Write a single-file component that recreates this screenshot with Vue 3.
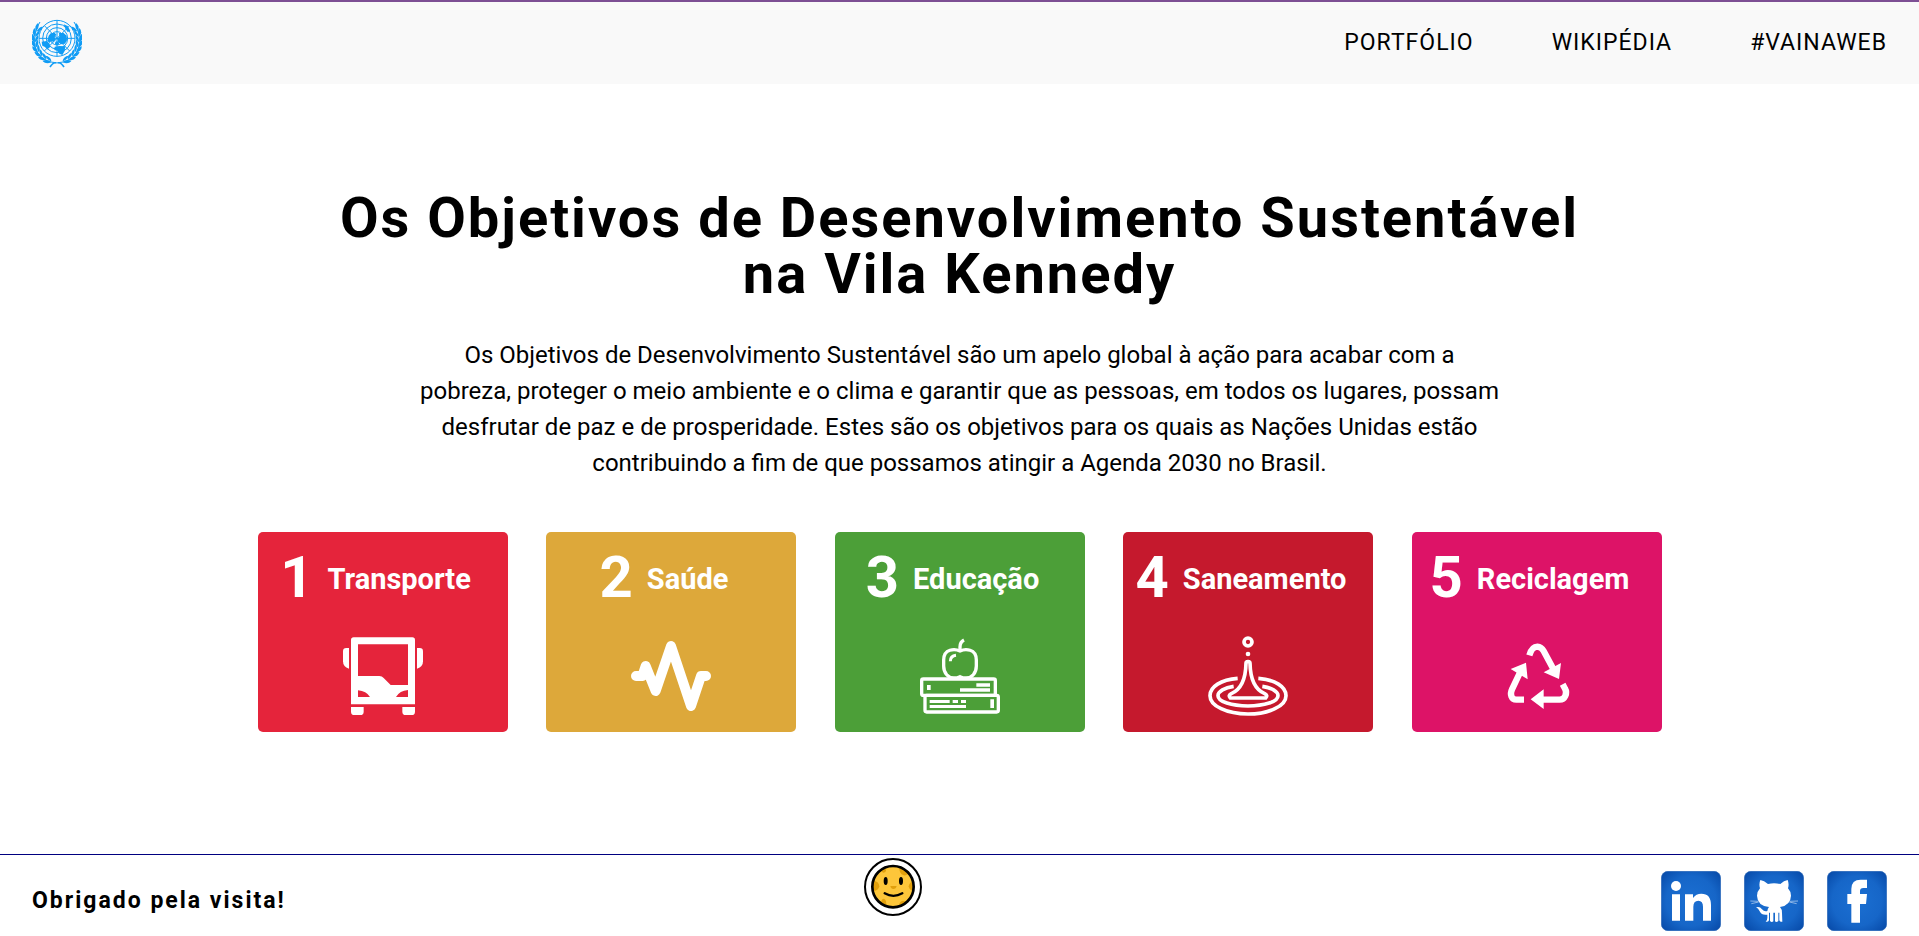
<script setup>
const links = [
  { label: 'PORTFÓLIO', href: '#portfolio' },
  { label: 'WIKIPÉDIA', href: '#wikipedia' },
  { label: '#VAINAWEB', href: '#vainaweb' }
]

const goals = [
  { number: 1, label: 'Transporte', kind: 'transport', viewBox: '279 348 240 240' },
  { number: 2, label: 'Saúde', kind: 'health', viewBox: '276 348 240 240' },
  { number: 3, label: 'Educação', kind: 'education', viewBox: '270 348 240 240' },
  { number: 4, label: 'Saneamento', kind: 'sanitation', viewBox: '279 348 240 240' },
  { number: 5, label: 'Reciclagem', kind: 'recycling', viewBox: '291 348 240 240' }
]

// Angles of the laurel leaves, measured from the bottom of the emblem.
const leaves = [22, 36, 50, 64, 78, 92, 106, 120]
</script>

<template>
  <div class="page">
    <header class="header">
      <a class="logo" href="#inicio" aria-label="Nações Unidas">
        <svg viewBox="0 0 150 150" fill="none" stroke="#109cf5">
          <g stroke-width="3">
            <circle cx="75" cy="61" r="54" />
            <circle cx="75" cy="61" r="43" />
            <circle cx="75" cy="61" r="32" />
            <circle cx="75" cy="61" r="20" />
            <path d="M75 7v108M21 61h108M37 23l76 76M113 23l-76 76" />
          </g>
          <g fill="#109cf5" stroke="none">
            <path d="M50 53l6-7 12-2 5 6-5 7 3 8-7 7-6-3-6 6-6-7z" />
            <path d="M81 45l14 0 9 8 1 14-6 10-12 2-9-7-2-10 6-6z" />
            <path d="M68 86l14-2 18 1-2 14-7 12-9-4-6-9-9-2z" />
            <path d="M29 71l15-2 9 8 2 9-8 8-8-7-8-4z" />
            <path d="M95 19l12 5 8 15-8 3-7-10z" />
            <circle cx="75" cy="76" r="6" />
          </g>
          <g v-for="side in [1, -1]" :key="side" :transform="side === 1 ? '' : 'translate(150 0) scale(-1 1)'">
            <path d="M79 134C115 132 141 109 142 72C143 48 136 28 126 12" stroke-width="3" />
            <g v-for="a in leaves" :key="a" :transform="`rotate(${-a} 75 66)`" fill="#109cf5" stroke="none">
              <path d="M66 132q9-13 23-9q-8 10-23 9z" />
              <path d="M66 134q11 13 25 7q-9-12-25-7z" />
            </g>
            <path d="M76 135q10-4 20 12" stroke-width="5" />
          </g>
        </svg>
      </a>
      <nav class="nav" aria-label="Principal">
        <a v-for="link in links" :key="link.href" :href="link.href">{{ link.label }}</a>
      </nav>
    </header>

    <main class="main">
      <h1>Os Objetivos de Desenvolvimento Sustentável na Vila Kennedy</h1>
      <p class="intro">
        Os Objetivos de Desenvolvimento Sustentável são um apelo global à ação para acabar com a
        pobreza, proteger o meio ambiente e o clima e garantir que as pessoas, em todos os lugares,
        possam desfrutar de paz e de prosperidade. Estes são os objetivos para os quais as Nações
        Unidas estão contribuindo a fim de que possamos atingir a Agenda 2030 no Brasil.
      </p>

      <section class="cards" aria-label="Objetivos">
        <article v-for="goal in goals" :key="goal.number" class="card" :class="goal.kind">
          <h2 class="title">
            <span class="number">{{ goal.number }}</span>
            <span class="label">{{ goal.label }}</span>
          </h2>
          <svg class="icon" :viewBox="goal.viewBox" fill="none" aria-hidden="true">
            <g v-if="goal.kind === 'transport'" fill="#fff">
              <path
                fill-rule="evenodd"
                d="M311 352H487Q495 352 495 360V553H303V360Q303 352 311 352ZM324 373V468H388Q396 468 401 474L422 495H474V373ZM324 511V531H360Q349 513 324 511ZM474 510Q449 512 438 531H474Z"
              />
              <path d="M303 561H341V575Q341 585 331 585H313Q303 585 303 575Z" />
              <path d="M457 561H495V575Q495 585 485 585H467Q457 585 457 575Z" />
              <path d="M297 384V446Q279 441 279 424V394Q279 384 289 384Z" />
              <path d="M501 384V446Q519 441 519 424V394Q519 384 509 384Z" />
            </g>
            <path
              v-else-if="goal.kind === 'health'"
              d="M291 468H310L320 438L350 513L396 378L456 558L486 468H501"
              stroke="#fff"
              stroke-width="30"
              stroke-linecap="round"
              stroke-linejoin="round"
            />
            <g v-else-if="goal.kind === 'education'" stroke="#fff" stroke-width="10">
              <path d="M390 393C375 386 341 385 341 420V438C341 460 355 474 372 474Q381 474 390 470Q399 474 408 474C425 474 439 460 439 438V420C439 385 405 386 390 393Z" />
              <path d="M390 393V381Q390 366 402 360" />
              <path d="M361 424Q361 408 378 406" stroke-width="9" />
              <rect x="275" y="477" width="221" height="49" rx="5" />
              <rect x="285" y="526" width="220" height="50" rx="5" />
              <path
                d="M291 495h11v15h-11zM439 490h41v10h-41zM390 505h90v10h-90zM299 540h60v9h-60zM368 540h16v9h-16zM393 540h15v9h-15zM299 555h109v9h-109zM481 538h11v26h-11z"
                fill="#fff"
                stroke="none"
              />
            </g>
            <g v-else-if="goal.kind === 'sanitation'" stroke="#fff" stroke-width="11">
              <circle cx="399" cy="366" r="12" />
              <circle cx="399" cy="402" r="7" fill="#fff" stroke="none" />
              <path d="M368 475C318 479 285 500 285 527C285 558 336 582 399 582C462 582 513 558 513 527C513 500 480 479 430 475" />
              <path d="M356 499C329 503 309 514 309 527C309 545 350 558 399 558C448 558 489 545 489 527C489 514 469 503 442 499" />
              <path d="M393 430Q393 425 399 425Q405 425 405 430C406 480 420 509 449 521Q460 527 452 534H346Q338 527 349 521C378 509 392 480 393 430Z" stroke-linejoin="round" />
            </g>
            <g v-else stroke="#fff" stroke-width="19">
              <path d="M388 406Q396 380 412 380Q424 381 431 393L460 447" />
              <path d="M488 493L495 506C503 520 495 539 479 539H425" />
              <path d="M372 539H349C334 539 329 523 336 508L365 447" />
              <path d="M431 457L483 429L477 477ZM392 538L431 508V567ZM378 428L332 447L383 478Z" fill="#fff" stroke="none" />
            </g>
          </svg>
        </article>
      </section>
    </main>

    <footer class="footer">
      <p class="thanks">Obrigado pela visita!</p>
      <button class="smile" type="button" aria-label="Sorriso">
        <svg viewBox="45 45 162 162">
          <circle cx="126" cy="125" r="63" fill="#fdc63a" />
          <g fill="#e2a00c">
            <path d="M146 65L176 81Q163 97 152 88Q143 78 146 65Z" />
            <path d="M65 108Q84 108 85 124Q83 138 65 138Z" />
            <path d="M187 110Q175 110 173 124Q175 136 187 139Z" />
            <circle cx="98" cy="76" r="7" />
            <path d="M90 174Q91 161 99 161Q108 165 105 184Z" />
            <path d="M144 184Q145 168 156 167Q165 168 166 174Z" />
            <path d="M118 123H137Q135 132 127 132Q120 132 118 123Z" />
          </g>
          <circle cx="126" cy="125" r="62" fill="none" stroke="#000" stroke-width="8" />
          <ellipse cx="104" cy="108" rx="6" ry="12" />
          <ellipse cx="150" cy="108" rx="6" ry="12" />
          <path d="M101 145Q127 160 154 145" fill="none" stroke="#000" stroke-width="7" stroke-linecap="round" />
        </svg>
      </button>
      <div class="social">
        <a href="#linkedin" aria-label="LinkedIn">
          <svg viewBox="66 78 180 180" fill="#fff">
            <defs>
              <radialGradient id="tile" cx="50%" cy="50%" r="70%">
                <stop offset="0" stop-color="#1b6fd2" />
                <stop offset="0.6" stop-color="#1666c8" />
                <stop offset="1" stop-color="#0648a6" />
              </radialGradient>
            </defs>
            <rect x="67" y="79" width="178" height="178" rx="20" fill="url(#tile)" stroke="#2b67b6" stroke-width="2" />
            <circle cx="111" cy="123" r="15" />
            <path d="M99 148h24v79H99zM138 148h24v11q9-13 25-13q29 0 29 34v47h-24v-42q0-18-14-18q-15 0-15 18v42h-25z" />
          </svg>
        </a>
        <a href="#github" aria-label="GitHub">
          <svg viewBox="315 78 180 180" fill="#fff">
            <rect x="316" y="79" width="178" height="178" rx="20" fill="url(#tile)" stroke="#2b67b6" stroke-width="2" />
            <path d="M364 105Q375 107 387 117Q405 112 424 117Q435 107 446 105Q451 117 447 130Q456 140 456 152Q455 181 423 186Q429 192 429 204L430 230Q423 232 421 226V203H418V228Q412 233 408 229V203H403V229Q398 233 393 228V203H390V226Q387 232 380 230Q385 226 385 218V209Q368 212 362 199Q358 190 351 187Q362 183 369 193Q376 201 385 198Q386 190 390 186Q355 182 354 152Q354 140 363 130Q359 117 364 105Z" />
            <path d="M334 168L358 169M337 176L359 171M452 169L477 168M451 171L473 176" fill="none" stroke="#c9def6" stroke-width="2" />
          </svg>
        </a>
        <a href="#facebook" aria-label="Facebook">
          <svg viewBox="564 78 180 180" fill="#fff">
            <rect x="565" y="79" width="178" height="178" rx="20" fill="url(#tile)" stroke="#2b67b6" stroke-width="2" />
            <path d="M637 233V177H625V147H637V132Q637 104 665 104H684V129H673Q663 129 663 138V147H684L681 177H663V233Z" />
          </svg>
        </a>
      </div>
    </footer>
  </div>
</template>

<style>
body {
  margin: 0;
  background: #fff;
}
</style>

<style scoped>
.page {
  box-sizing: border-box;
  display: flex;
  flex-direction: column;
  min-height: 100vh;
  font-family: Roboto, "Liberation Sans", sans-serif;
  color: #000;
}

.header {
  display: flex;
  align-items: center;
  justify-content: space-between;
  padding: 16px 32px;
  border-top: 2px solid #7d4f94;
  background: #f9f9f9;
}

svg {
  display: block;
  width: 100%;
  height: 100%;
}

.logo {
  width: 50px;
  height: 50px;
}

.nav {
  display: flex;
  gap: 78px;
  font-size: 23px;
  line-height: 28px;
  letter-spacing: 1px;
}

.nav a {
  color: inherit;
  text-decoration: none;
}

.main {
  flex: 1;
  display: flex;
  flex-direction: column;
  align-items: center;
  justify-content: center;
  padding-bottom: 16px;
  text-align: center;
}

h1 {
  max-width: 1280px;
  margin: 0 0 35px;
  font-size: 56px;
  font-weight: 700;
  line-height: 56px;
  letter-spacing: 2px;
}

.intro {
  max-width: 1080px;
  margin: 0 0 51px;
  font-size: 24px;
  line-height: 36px;
}

.cards {
  display: flex;
  flex-wrap: wrap;
  justify-content: space-between;
  gap: 16px;
  width: 100%;
  max-width: 1404px;
}

.card {
  box-sizing: border-box;
  display: flex;
  flex-direction: column;
  align-items: center;
  justify-content: space-between;
  width: 250px;
  min-height: 200px;
  padding: 16px 0;
  border-radius: 5px;
  color: #fff;
}

.transport { background: #e5243b; }
.health { background: #dda83a; }
.education { background: #4c9f38; }
.sanitation { background: #c5192d; }
.recycling { background: #dd1367; }

.title {
  display: flex;
  align-items: center;
  margin: 0;
  font-weight: 700;
}

.number {
  font-size: 58px;
  line-height: 58px;
}

.label {
  padding: 4px 14px 0;
  font-size: 29px;
  line-height: 34px;
}

.icon {
  width: 80px;
  height: 80px;
}

.footer {
  position: relative;
  display: flex;
  align-items: center;
  justify-content: space-between;
  padding: 16px 32px 5px;
  border-top: 1px solid #000080;
}

.thanks {
  margin: 0;
  font-size: 23px;
  font-weight: 700;
  line-height: 28px;
  letter-spacing: 2px;
}

.smile {
  position: absolute;
  left: 45%;
  bottom: 20px;
  box-sizing: border-box;
  width: 58px;
  height: 58px;
  padding: 0;
  border: 2px solid #000;
  border-radius: 50%;
  background: #fff;
}

.social {
  display: flex;
  gap: 23px;
}

.social a {
  width: 60px;
  height: 60px;
}
</style>
